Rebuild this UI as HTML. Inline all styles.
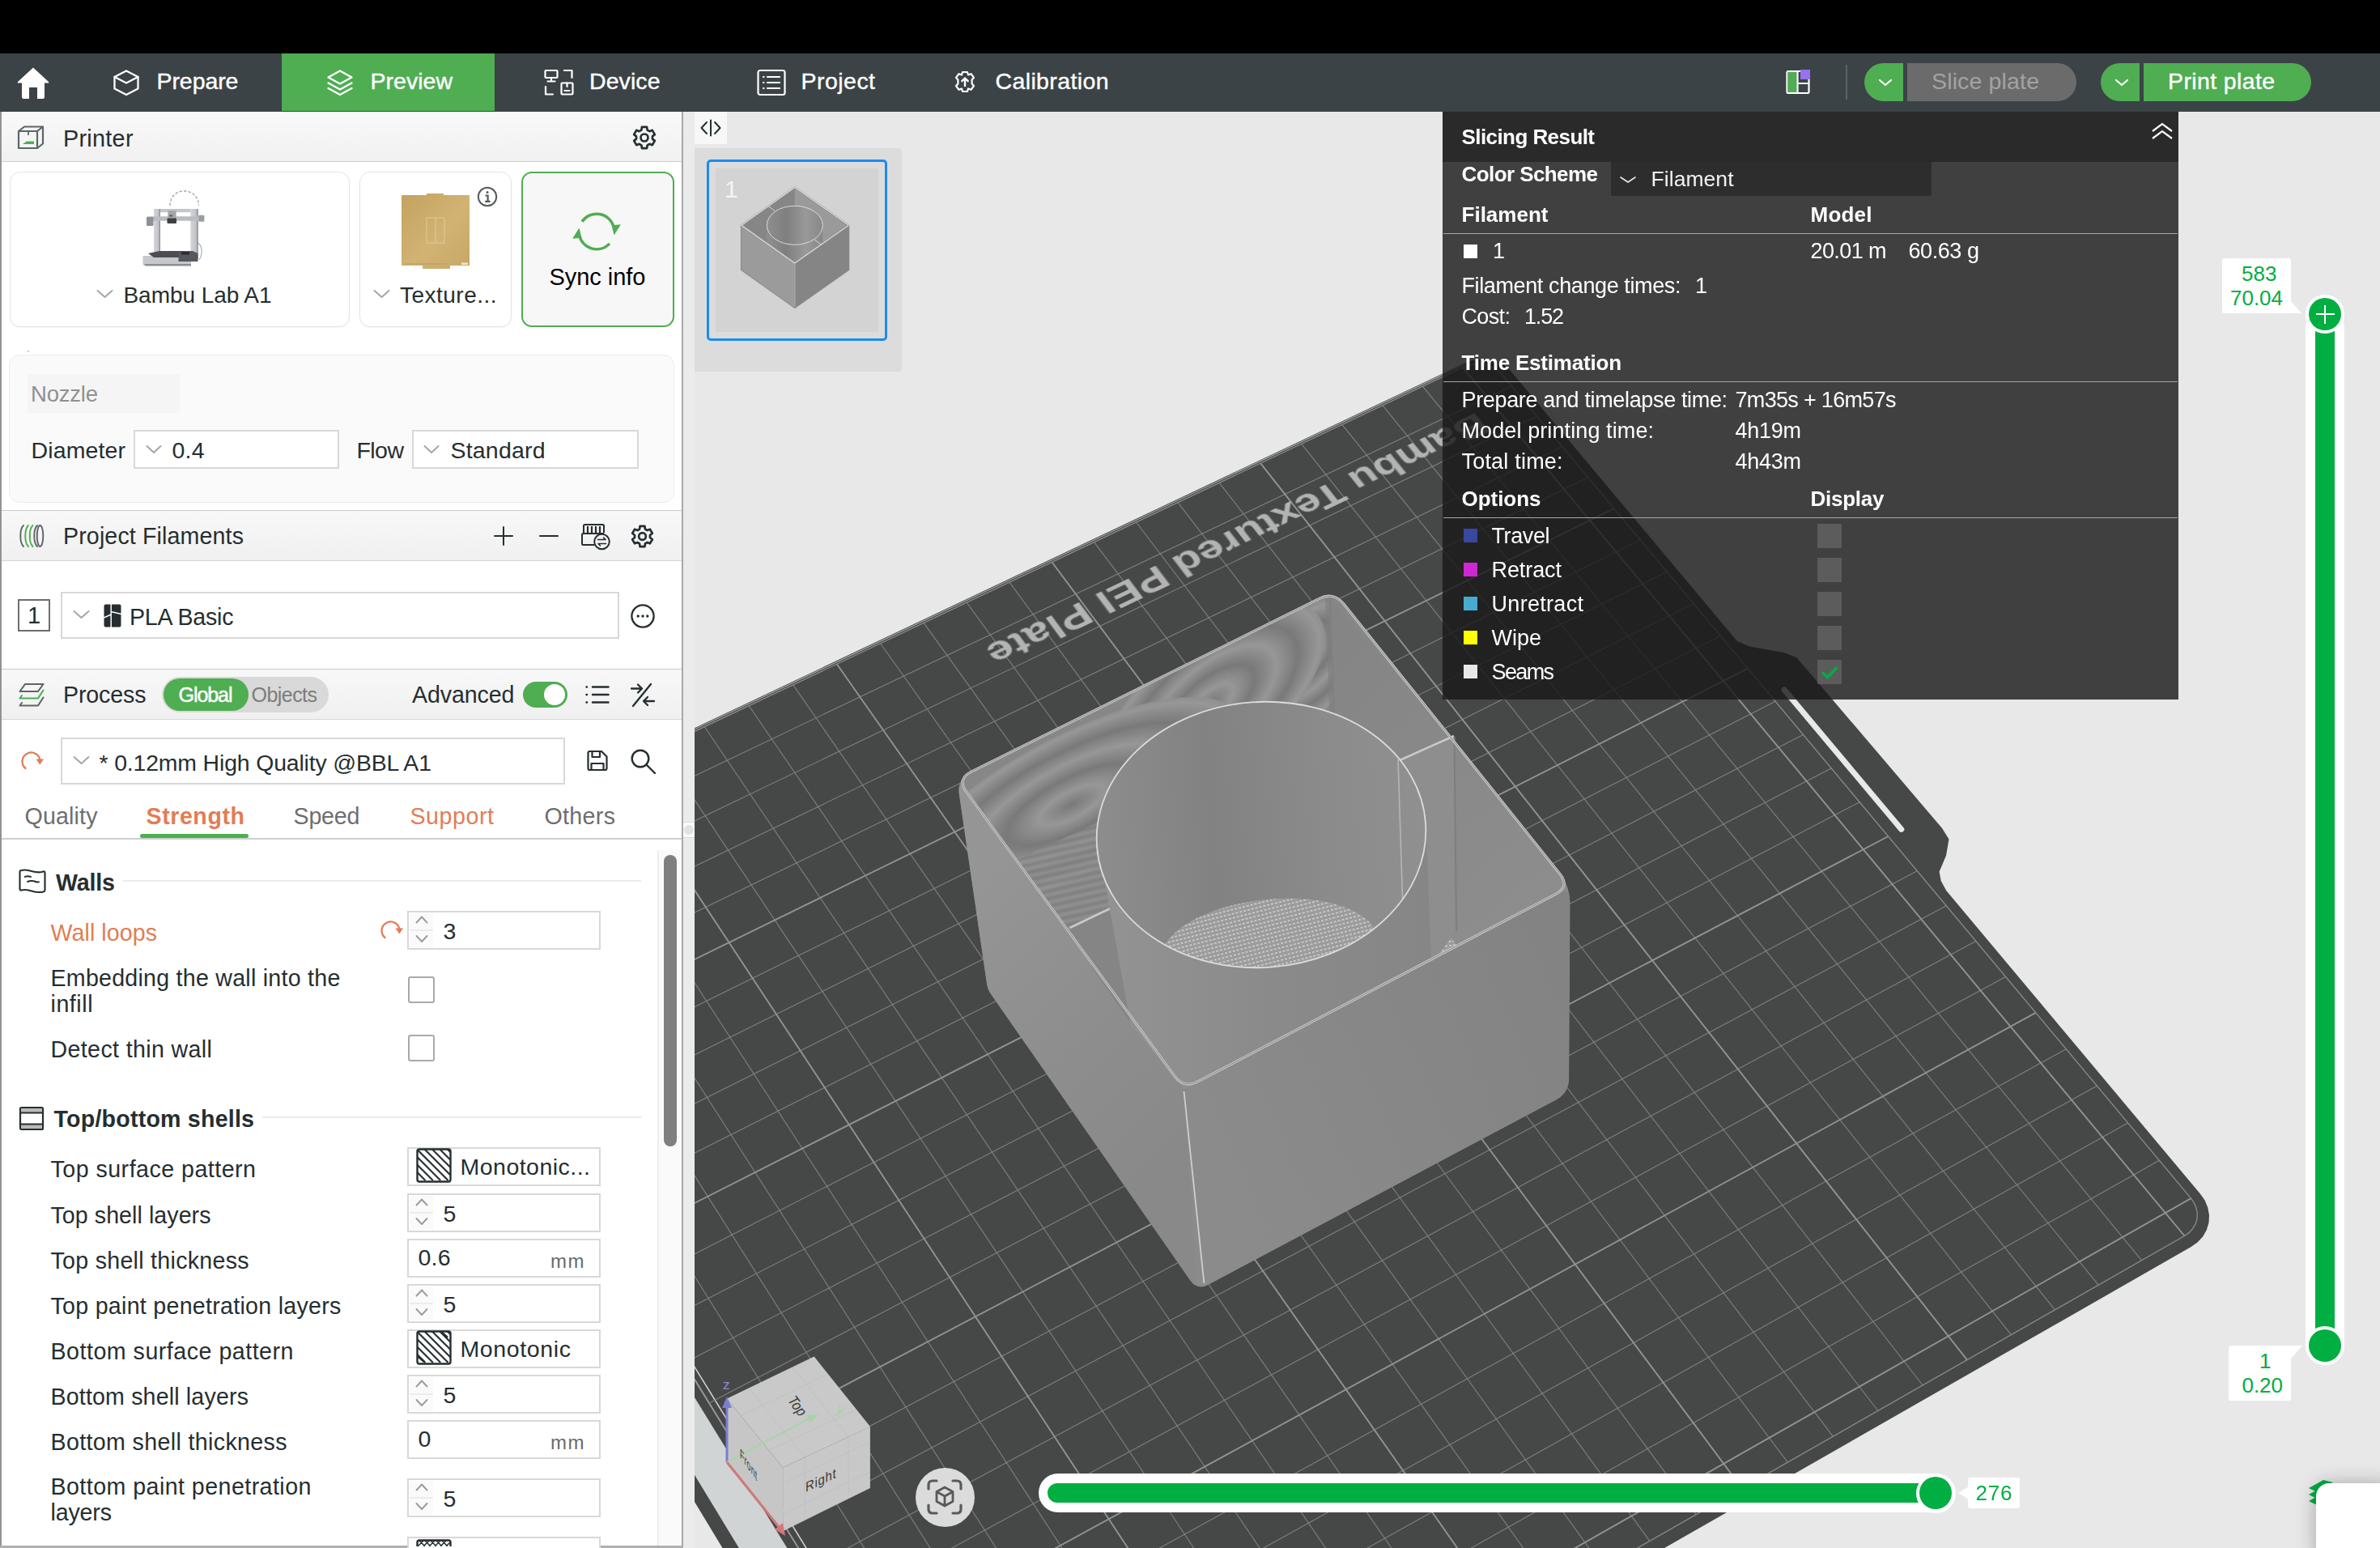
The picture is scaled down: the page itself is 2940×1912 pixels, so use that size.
<!DOCTYPE html>
<html lang="en"><head><meta charset="utf-8"><title>Bambu Studio</title><style>
*{box-sizing:border-box;margin:0;padding:0}
html,body{width:2940px;height:1912px;overflow:hidden;background:#e8e8e8}
body{position:relative;font-family:"Liberation Sans",sans-serif;}
.b{position:absolute;display:block}
.t{position:absolute;white-space:nowrap;display:block}
#vp{position:absolute;left:844px;top:138px;width:2096px;height:1774px;overflow:hidden;background:#e8e8e8}
#vpi{position:absolute;left:-844px;top:-138px;width:2940px;height:1912px}
</style></head>
<body>
<div id="vp"><div id="vpi">
<div class="b" style="left:844px;top:138px;width:14px;height:1774px;background:#ebebeb"></div>
<div class="b" style="left:844px;top:1015px;width:14px;height:20px;background:#fafafa;border-top:1px solid #d9d9d9;border-bottom:1px solid #d9d9d9"></div>
<div class="b" style="left:845px;top:1019.2px;width:11.6px;height:11.6px;background:#e2e2e2;border-radius:6px"></div>
<svg class="b" style="left:858px;top:138px" width="2082" height="1774" viewBox="858 138 2082 1774">
<path d="M439.8 1164.6 L434.9 1153.7 L432.9 1142.0 L433.8 1129.9 L437.7 1117.9 L444.3 1106.4 L453.3 1095.9 L464.5 1086.9 L477.3 1079.5 L1809.9 448.3 L1817.0 445.6 L1824.7 444.0 L1832.6 443.6 L1840.5 444.3 L1848.0 446.2 L1854.9 449.2 L1860.9 453.1 L1865.8 457.8 L2146.0 792.1 L2161.5 798.6 L2203.5 806.0 L2219.5 812.3 L2398.7 1022.6 L2407.5 1036.4 L2404.0 1056.7 L2395.6 1076.7 L2397.7 1088.0 L2404.2 1100.1 L2717.9 1474.4 L2723.6 1482.6 L2727.3 1491.6 L2729.0 1500.9 L2728.5 1510.2 L2725.9 1519.0 L2721.3 1527.2 L2714.8 1534.3 L2706.7 1540.1 L1267.8 2362.6 L1252.2 2369.7 L1235.5 2374.0 L1218.5 2375.2 L1201.8 2373.2 L1186.1 2368.3 L1171.9 2360.5 L1159.8 2350.2 L1150.3 2337.7 Z" fill="#464848"/>
<path d="M587.6 1377.0 L630.7 1355.8 L1244.8 2355.7 L1198.6 2382.1 Z" fill="#d0d4d4"/>
<path d="M537.1 1168.0 L1242.2 2311.4" stroke="#d8d8d8" stroke-width="1.5" fill="none"/>
<path d="M530.2 1171.3 L1234.7 2315.7" stroke="#e0e0e0" stroke-width="1.5" fill="none"/>
<path d="M486.8 1076.7 L1815.2 447.3" stroke="#a4a6a6" stroke-width="1.2" fill="none"/>
<path d="M533.9 1057.1 L1318.4 2313.8 M503.2 1127.6 L1867.3 476.8 M590.9 1030.1 L1380.8 2278.2 M530.2 1171.3 L1898.5 514.1 M647.5 1003.3 L1442.7 2242.8 M557.4 1215.5 L1930.0 551.8 M703.8 976.6 L1504.2 2207.8 M584.9 1260.2 L1961.8 589.8 M815.2 923.8 L1625.8 2138.4 M640.7 1350.8 L2026.3 666.9 M870.4 897.7 L1686.0 2104.1 M669.0 1396.9 L2059.0 706.1 M925.2 871.7 L1745.7 2070.0 M697.6 1443.4 L2092.1 745.6 M979.7 845.9 L1805.0 2036.2 M726.6 1490.4 L2125.4 785.4 M1087.6 794.7 L1922.3 1969.3 M785.4 1585.9 L2193.1 866.3 M1141.1 769.4 L1980.3 1936.2 M815.2 1634.4 L2227.4 907.4 M1194.2 744.2 L2037.9 1903.4 M845.4 1683.5 L2262.1 948.9 M1247.0 719.2 L2095.1 1870.7 M875.9 1733.0 L2297.1 990.7 M1351.6 669.6 L2208.3 1806.2 M938.0 1833.8 L2368.2 1075.7 M1403.5 645.0 L2264.3 1774.2 M969.5 1885.0 L2404.3 1118.8 M1455.0 620.6 L2319.9 1742.5 M1001.4 1936.7 L2440.7 1162.4 M1506.2 596.3 L2375.1 1711.0 M1033.6 1989.1 L2477.5 1206.4 M1607.6 548.2 L2484.4 1648.6 M1099.1 2095.5 L2552.3 1295.8 M1657.9 524.4 L2538.5 1617.8 M1132.4 2149.6 L2590.2 1341.2 M1707.9 500.7 L2592.2 1587.2 M1166.1 2204.4 L2628.6 1387.0 M1757.5 477.2 L2645.5 1556.7 M1200.2 2259.7 L2667.3 1433.3" stroke="#7d8180" stroke-width="1.1" fill="none"/>
<path d="M759.6 950.1 L1565.2 2173.0 M612.6 1305.3 L1993.9 628.2 M1033.8 820.2 L1863.8 2002.6 M755.8 1537.9 L2159.1 825.7 M1299.5 694.3 L2151.9 1838.3 M906.8 1783.1 L2332.5 1033.0 M1557.1 572.2 L2429.9 1679.7 M1066.2 2042.0 L2514.7 1250.9 M1806.9 453.8 L2698.5 1526.5 M1234.7 2315.7 L2706.5 1480.1" stroke="#8f9392" stroke-width="1.9" fill="none"/>
<path d="M492.5 1110.2 L490.1 1104.8 L489.1 1099.0 L489.5 1093.0 L491.4 1087.1 L494.6 1081.4 L499.1 1076.2 L504.6 1071.6 L511.0 1068.0 L1806.9 453.8 L1813.0 451.5 L1819.6 450.1 L1826.4 449.8 L1833.2 450.4 L1839.6 452.0 L1845.6 454.6 L1850.7 457.9 L1854.9 462.0 L2706.5 1480.1 L2710.5 1486.0 L2713.1 1492.3 L2714.3 1498.9 L2714.0 1505.4 L2712.1 1511.7 L2708.8 1517.4 L2704.3 1522.4 L2698.5 1526.5 L1293.3 2328.1 L1285.5 2331.6 L1277.3 2333.7 L1268.8 2334.3 L1260.5 2333.4 L1252.6 2330.9 L1245.5 2327.0 L1239.4 2321.9 L1234.7 2315.7 Z" stroke="#8a8c8c" stroke-width="1.3" fill="none"/>
<path d="M2204.1 852.0 L2348.8 1024.4" stroke="#e8e8e8" stroke-width="7" stroke-linecap="round" fill="none"/>
<defs><linearGradient id="mgL" x1="1190" y1="1100" x2="1480" y2="1400" gradientUnits="userSpaceOnUse"><stop offset="0" stop-color="#959595"/><stop offset="0.6" stop-color="#8d8d8d"/><stop offset="1" stop-color="#898989"/></linearGradient><linearGradient id="mgR" x1="1480" y1="1400" x2="1940" y2="1200" gradientUnits="userSpaceOnUse"><stop offset="0" stop-color="#8b8b8b"/><stop offset="1" stop-color="#838383"/></linearGradient><linearGradient id="mgI" x1="1300" y1="800" x2="1500" y2="1200" gradientUnits="userSpaceOnUse"><stop offset="0" stop-color="#8f8f8f"/><stop offset="0.25" stop-color="#7c7c7c"/><stop offset="0.45" stop-color="#919191"/><stop offset="0.65" stop-color="#7f7f7f"/><stop offset="1" stop-color="#8a8a8a"/></linearGradient><linearGradient id="mgC" x1="1355" y1="0" x2="1762" y2="0" gradientUnits="userSpaceOnUse"><stop offset="0" stop-color="#8d8d8d"/><stop offset="0.35" stop-color="#828282"/><stop offset="0.7" stop-color="#8b8b8b"/><stop offset="1" stop-color="#909090"/></linearGradient><linearGradient id="mgO" x1="1385" y1="0" x2="1770" y2="0" gradientUnits="userSpaceOnUse"><stop offset="0" stop-color="#929292"/><stop offset="0.5" stop-color="#8a8a8a"/><stop offset="1" stop-color="#868686"/></linearGradient><clipPath id="cpE"><ellipse cx="1558" cy="1031" rx="203.5" ry="164" transform="rotate(-4 1558 1031)"/></clipPath><clipPath id="cpRim"><path d="M1193.8 978.1 Q1182.0 962.0 1199.9 953.1 L1629.6 739.4 Q1647.5 730.5 1660.0 746.1 L1927.0 1079.4 Q1939.5 1095.0 1921.8 1104.3 L1480.2 1335.7 Q1462.5 1345.0 1450.7 1328.9 Z"/></clipPath><radialGradient id="eye" spreadMethod="repeat" r="0.19"><stop offset="0" stop-color="#797979"/><stop offset="0.5" stop-color="#979797"/><stop offset="1" stop-color="#797979"/></radialGradient><linearGradient id="bands" spreadMethod="repeat" x1="0" y1="0" x2="2" y2="9" gradientUnits="userSpaceOnUse"><stop offset="0" stop-color="#7e7e7e"/><stop offset="0.5" stop-color="#939393"/><stop offset="1" stop-color="#7e7e7e"/></linearGradient><linearGradient id="mgFR" x1="1650" y1="800" x2="1930" y2="1150" gradientUnits="userSpaceOnUse"><stop offset="0" stop-color="#858585"/><stop offset="1" stop-color="#8e8e8e"/></linearGradient><pattern id="hatch" width="5" height="5" patternUnits="userSpaceOnUse" patternTransform="rotate(-8)"><rect width="5" height="5" fill="#9b9b9b"/><rect width="3" height="1.6" fill="#d0d0d0"/></pattern></defs>
<path d="M1184.9 981.8 Q1182.0 962.0 1199.9 953.1 L1627.8 740.3 Q1647.5 730.5 1661.3 747.7 L1927.0 1079.4 Q1939.5 1095.0 1939.4 1115.0 L1938.1 1332.0 Q1938.0 1350.0 1922.1 1358.4 L1493.1 1586.5 Q1479.0 1594.0 1469.9 1580.9 L1223.4 1226.9 Q1220.0 1222.0 1219.1 1216.1 Z" fill="#8a8a8a"/>
<clipPath id="cpSil"><path d="M1184.9 981.8 Q1182.0 962.0 1199.9 953.1 L1627.8 740.3 Q1647.5 730.5 1661.3 747.7 L1927.0 1079.4 Q1939.5 1095.0 1939.4 1115.0 L1938.1 1332.0 Q1938.0 1350.0 1922.1 1358.4 L1493.1 1586.5 Q1479.0 1594.0 1469.9 1580.9 L1223.4 1226.9 Q1220.0 1222.0 1219.1 1216.1 Z"/></clipPath><g clip-path="url(#cpSil)">
<path d="M1184.6 979.8 Q1182.0 962.0 1192.6 976.5 L1462.5 1345.0 L1479.0 1594.0 L1223.4 1226.9 Q1220.0 1222.0 1219.1 1216.1 Z" fill="url(#mgL)"/>
<path d="M1462.5 1345.0 L1923.6 1103.4 Q1939.5 1095.0 1939.4 1113.0 L1938.1 1332.0 Q1938.0 1350.0 1922.1 1358.4 L1479.0 1594.0 Z" fill="url(#mgR)"/>
</g>
<path d="M1193.8 978.1 Q1182.0 962.0 1199.9 953.1 L1629.6 739.4 Q1647.5 730.5 1660.0 746.1 L1927.0 1079.4 Q1939.5 1095.0 1921.8 1104.3 L1480.2 1335.7 Q1462.5 1345.0 1450.7 1328.9 Z" fill="#878787"/>
<g clip-path="url(#cpRim)">
<path d="M1220 1216 L1651 975 L1938 1346 L1479 1588 Z" fill="url(#hatch)"/>
<path d="M1182 962 L1643.5 730.5 L1651 975 L1220 1216 Z" fill="#878787"/>
<clipPath id="cpFL"><path d="M1182 962 L1643.5 730.5 L1651 975 L1220 1216 Z"/></clipPath>
<g clip-path="url(#cpFL)"><ellipse cx="1614" cy="806" rx="120" ry="66" transform="rotate(-52 1614 806)" fill="url(#eye)"/><ellipse cx="1497" cy="868" rx="170" ry="78" transform="rotate(-40 1497 868)" fill="url(#eye)"/><ellipse cx="1324" cy="994" rx="235" ry="84" transform="rotate(-28 1324 994)" fill="url(#eye)"/><path d="M1240 1070 L1380 1005 L1390 1130 L1330 1160 Z" fill="url(#bands)" opacity=".8"/></g>
<path d="M1641.5 734.5 L1939.5 1095 L1938 1346 L1651 975 Z" fill="url(#mgFR)"/>
<path d="M1640.5 738.5 L1649 975" stroke="#7d7d7d" stroke-width="7" opacity=".6" fill="none"/>
</g>
<path d="M1321 1146 L1382 1117 L1396 1262 L1352 1200 Z" fill="#858585"/>
<path d="M1321.5 1146 L1382 1117" stroke="#c9c9c9" stroke-width="2.6" fill="none"/>
<path d="M1727 940 L1796 909 L1799 1150 L1770 1188 L1733 1120 Z" fill="#8e8e8e"/>
<path d="M1727 940 L1796 909" stroke="#c9c9c9" stroke-width="2.6" fill="none"/>
<path d="M1796.5 910 L1799 1150" stroke="#7e7e7e" stroke-width="2" fill="none"/>
<path d="M1355.5 1039 L1397 1266 L1462.5 1345 L1768 1189 L1761.5 1017 A203.5 164 -4 0 1 1355.5 1039 Z" fill="url(#mgO)"/>
<ellipse cx="1558" cy="1031" rx="203.5" ry="164" transform="rotate(-4 1558 1031)" fill="url(#mgC)"/>
<g clip-path="url(#cpE)"><ellipse cx="1568" cy="1172" rx="134" ry="61" transform="rotate(-6 1568 1172)" fill="url(#hatch)"/><path d="M1727 938 L1733 1125" stroke="#b5b5b5" stroke-width="1.6"/></g>
<ellipse cx="1558" cy="1031" rx="203.5" ry="164" transform="rotate(-4 1558 1031)" fill="none" stroke="#dcdcdc" stroke-width="1.8"/>
<path d="M1193.8 978.1 Q1182.0 962.0 1199.9 953.1 L1629.6 739.4 Q1647.5 730.5 1660.0 746.1 L1927.0 1079.4 Q1939.5 1095.0 1921.8 1104.3 L1480.2 1335.7 Q1462.5 1345.0 1450.7 1328.9 Z" fill="none" stroke="#c4c4c4" stroke-width="3.2"/>
<path d="M1193.8 978.1 Q1182.0 962.0 1199.9 953.1 L1629.6 739.4 Q1647.5 730.5 1660.0 746.1 L1927.0 1079.4 Q1939.5 1095.0 1921.8 1104.3 L1480.2 1335.7 Q1462.5 1345.0 1450.7 1328.9 Z" fill="none" stroke="#7c7c7c" stroke-width="0.8"/>
<path d="M1462.5 1348 L1487.4 1585" stroke="#cfcfcf" stroke-width="1.8" fill="none"/>
<polygon points="897.9,1727.5 1005.7,1675.6 1074.9,1762.1 967.1,1812.7" fill="#c9c9c9"/><polygon points="897.9,1727.5 967.1,1812.7 967.1,1891.2 897.9,1806.1" fill="#c6c6c6"/><polygon points="967.1,1812.7 1074.9,1762.1 1074.9,1838.0 967.1,1891.2" fill="#c8c8c8"/>
<g stroke="#b4b4b4" stroke-width="0.8" stroke-dasharray="1.5 1.5" fill="none"><path d="M925 1714.5 L994 1800 M979 1688.5 L1048 1775 M915 1749 L1023 1697 M950 1791 L1058 1741"/><path d="M994 1800 V1878 M1048 1775 V1851 M967 1832 L1075 1781 M967 1870 L1075 1818"/></g>
<path d="M898 1806 L898 1738" stroke="#7d7dd0" stroke-width="3" fill="none"/><path d="M898 1725 L892 1739 L904 1739 Z" fill="#7d7dd0"/>
<path d="M898 1806 L1000 1752" stroke="#a8d4a8" stroke-width="2.2" fill="none"/><path d="M1011 1747 L996 1748 L1001 1757 Z" fill="#a8d4a8"/>
<path d="M898 1806 L962 1886" stroke="#d07878" stroke-width="3" fill="none"/><path d="M970 1897 L957 1889 L967 1881 Z" fill="#d07878"/>
<text x="893" y="1716" font-family="Liberation Sans, sans-serif" font-size="17" fill="#8a8adc">z</text>
<text x="1032" y="1745" font-family="Liberation Sans, sans-serif" font-size="19" font-style="italic" fill="#a8d4a8" transform="rotate(15 1032 1745)">y</text>
<text font-family="Liberation Sans, sans-serif" font-size="21" fill="#3a3a3a" transform="matrix(0.45 0.62 -0.78 0.4 972 1729)">Top</text>
<text font-family="Liberation Sans, sans-serif" font-size="17" fill="#3a3a3a" transform="matrix(0.5 0.7 0 1 914 1800)" letter-spacing="0.6">Front</text>
<text font-family="Liberation Sans, sans-serif" font-size="17" fill="#3a3a3a" transform="matrix(0.88 -0.42 0 1 995 1843)" letter-spacing="0.8">Right</text>
</svg>
<div class="b" style="left:0;top:0;width:1024px;height:1024px;transform-origin:0 0;transform:matrix3d(1.476995,-0.593635,0,0.00008117,0.603447,0.941405,0,-0.00012524,0,0,1,0,476.58,1084.283,0,1);pointer-events:none;"><div style="position:absolute;left:508.0px;top:43.0px;width:476.0px;height:34.9px;font-size:34.9px;line-height:34.9px;color:#b3b3b3;white-space:nowrap;text-align:center;transform:rotate(180deg);font-weight:700;"><span style="display:inline-block;transform:scaleX(1.1);transform-origin:50% 50%;">Bambu Textured PEI Plate</span></div></div>
<div class="b" style="left:858px;top:138px;width:40px;height:39.5px;background:#f7f7f7;"></div>
<svg class="b" style="left:864px;top:147px" width="28" height="22" viewBox="0 0 28 22" fill="none" stroke="#262e30" stroke-width="2" stroke-linecap="round" stroke-linejoin="round"><path d="M9 4 L2.5 11 L9 18 M19 4 L25.5 11 L19 18 M14 1.5 V20.5"/></svg>
<div class="b" style="left:858px;top:183px;width:255.5px;height:276px;background:#dcdcdc;border-radius:0 4px 4px 0;"></div>
<div class="b" style="left:872.5px;top:197px;width:223.0px;height:223.5px;background:#d3d3d3;border:3.5px solid #1e8beb;border-radius:5px;box-shadow:inset 0 0 0 8px #dcdcdc;"></div>
<span class="t" style="left:895.0px;top:219.0px;font-size:30px;line-height:30px;color:#f4f4f4;letter-spacing:0.00px;">1</span>
<svg class="b" style="left:905px;top:222px" width="154" height="168" viewBox="905 222 154 168"><defs><linearGradient id="tg" x1="947" x2="1016" y1="0" y2="0" gradientUnits="userSpaceOnUse"><stop offset="0" stop-color="#8f8f8f"/><stop offset="0.35" stop-color="#7f7f7f"/><stop offset="0.7" stop-color="#999"/><stop offset="1" stop-color="#888"/></linearGradient></defs><path d="M981.8 231.5 L1048.3 278.3 V333.2 L981.8 380 L915.9 333.2 V278.3 Z" fill="#8a8a8a" stroke="#8a8a8a" stroke-width="2" stroke-linejoin="round"/><path d="M915.9 278.3 L981.8 325 V380 L915.9 333.2 Z" fill="#9b9b9b"/><path d="M1048.3 278.3 L981.8 325 V380 L1048.3 333.2 Z" fill="#858585"/><path d="M981.8 231.5 L1048.3 278.3 L981.8 325 L915.9 278.3 Z" fill="#868686"/><path d="M981.8 233 L1046 278.3 L1016 300 V278 L981.8 254 Z" fill="#9a9a9a"/><path d="M947.3 278.3 V300.5 L981.8 325 L1016.3 300.5 V278.3 Z" fill="url(#tg)"/><ellipse cx="981.8" cy="278.3" rx="34.5" ry="24" fill="url(#tg)" stroke="#e2e2e2" stroke-width="0.9"/><path d="M949 254.5 L957 260.5 M1006 296 L1015 302.5" stroke="#dedede" stroke-width="0.9"/><path d="M981.8 231.5 L1048.3 278.3 L981.8 325 L915.9 278.3 Z" fill="none" stroke="#e0e0e0" stroke-width="1.1" stroke-linejoin="round"/><path d="M981.8 326 V379" stroke="#a5a5a5" stroke-width="1.5"/></svg>
<div class="b" style="left:1782px;top:138px;width:909px;height:726px;background:rgba(25,25,25,0.81);"></div>
<div class="b" style="left:1782px;top:138px;width:909px;height:61.5px;background:rgba(0,0,0,0.35);"></div>
<span class="t" style="left:1805.5px;top:156.0px;font-size:26px;line-height:26px;color:#fff;letter-spacing:-0.57px;font-weight:700;">Slicing Result</span>
<svg class="b" style="left:2656px;top:150px" width="30" height="24" viewBox="0 0 30 24" fill="none" stroke="#fff" stroke-width="2.2" stroke-linejoin="miter"><path d="M3 12 L15 3 L27 12 M3 21 L15 12 L27 21"/></svg>
<span class="t" style="left:1805.5px;top:202.0px;font-size:26px;line-height:26px;color:#fff;letter-spacing:-0.58px;font-weight:700;">Color Scheme</span>
<div class="b" style="left:1990px;top:200px;width:396px;height:42px;background:#2d2d2d;border-radius:0 0 3px 3px;"></div>
<svg class="b" style="left:2000px;top:216px" width="22" height="12" viewBox="0 0 22 12" fill="none" stroke="#e8e8e8" stroke-width="1.6" stroke-linecap="round" stroke-linejoin="round"><path d="M2 3 L11 9 L20 3"/></svg>
<span class="t" style="left:2039.5px;top:208.2px;font-size:26.5px;line-height:26.5px;color:#f2f2f2;letter-spacing:0.06px;">Filament</span>
<span class="t" style="left:1805.5px;top:252.0px;font-size:26px;line-height:26px;color:#fff;letter-spacing:0.01px;font-weight:700;">Filament</span>
<span class="t" style="left:2236.5px;top:252.0px;font-size:26px;line-height:26px;color:#fff;letter-spacing:0.22px;font-weight:700;">Model</span>
<div class="b" style="left:1783px;top:287.5px;width:907px;height:1.5px;background:#a8a8a8;"></div>
<div class="b" style="left:1808px;top:302px;width:17px;height:17px;background:#fff;"></div>
<span class="t" style="left:1844.0px;top:296.5px;font-size:27px;line-height:27px;color:#fff;letter-spacing:0.00px;">1</span>
<span class="t" style="left:2236.5px;top:296.5px;font-size:27px;line-height:27px;color:#fff;letter-spacing:-0.59px;">20.01 m</span>
<span class="t" style="left:2357.5px;top:296.5px;font-size:27px;line-height:27px;color:#fff;letter-spacing:-0.43px;">60.63 g</span>
<span class="t" style="left:1805.5px;top:339.5px;font-size:27px;line-height:27px;color:#fff;letter-spacing:-0.39px;">Filament change times:</span>
<span class="t" style="left:2094.0px;top:339.5px;font-size:27px;line-height:27px;color:#fff;letter-spacing:0.00px;">1</span>
<span class="t" style="left:1805.5px;top:377.5px;font-size:27px;line-height:27px;color:#fff;letter-spacing:-0.63px;">Cost:</span>
<span class="t" style="left:1883.0px;top:377.5px;font-size:27px;line-height:27px;color:#fff;letter-spacing:-1.18px;">1.52</span>
<span class="t" style="left:1805.5px;top:435.0px;font-size:26px;line-height:26px;color:#fff;letter-spacing:-0.20px;font-weight:700;">Time Estimation</span>
<div class="b" style="left:1783px;top:470.5px;width:907px;height:1.5px;background:#a8a8a8;"></div>
<span class="t" style="left:1805.5px;top:480.5px;font-size:27px;line-height:27px;color:#fff;letter-spacing:-0.35px;">Prepare and timelapse time:</span>
<span class="t" style="left:2143.5px;top:480.5px;font-size:27px;line-height:27px;color:#fff;letter-spacing:-0.68px;">7m35s + 16m57s</span>
<span class="t" style="left:1805.5px;top:518.5px;font-size:27px;line-height:27px;color:#fff;letter-spacing:0.10px;">Model printing time:</span>
<span class="t" style="left:2143.5px;top:518.5px;font-size:27px;line-height:27px;color:#fff;letter-spacing:-0.26px;">4h19m</span>
<span class="t" style="left:1805.5px;top:556.5px;font-size:27px;line-height:27px;color:#fff;letter-spacing:0.20px;">Total time:</span>
<span class="t" style="left:2143.5px;top:556.5px;font-size:27px;line-height:27px;color:#fff;letter-spacing:-0.26px;">4h43m</span>
<span class="t" style="left:1805.5px;top:603.0px;font-size:26px;line-height:26px;color:#fff;letter-spacing:-0.04px;font-weight:700;">Options</span>
<span class="t" style="left:2236.5px;top:603.0px;font-size:26px;line-height:26px;color:#fff;letter-spacing:-0.25px;font-weight:700;">Display</span>
<div class="b" style="left:1783px;top:638.5px;width:907px;height:1.5px;background:#a8a8a8;"></div>
<div class="b" style="left:1808px;top:652.5px;width:17px;height:17.0px;background:#3a479f;"></div>
<span class="t" style="left:1842.5px;top:648.5px;font-size:27px;line-height:27px;color:#fff;letter-spacing:-0.40px;">Travel</span>
<div class="b" style="left:2245px;top:647px;width:30px;height:30px;background:rgba(120,120,120,0.5);"></div>
<div class="b" style="left:1808px;top:694.5px;width:17px;height:17.0px;background:#cf27d4;"></div>
<span class="t" style="left:1842.5px;top:690.5px;font-size:27px;line-height:27px;color:#fff;letter-spacing:-0.09px;">Retract</span>
<div class="b" style="left:2245px;top:689px;width:30px;height:30px;background:rgba(120,120,120,0.5);"></div>
<div class="b" style="left:1808px;top:736.5px;width:17px;height:17.0px;background:#46accf;"></div>
<span class="t" style="left:1842.5px;top:732.5px;font-size:27px;line-height:27px;color:#fff;letter-spacing:0.31px;">Unretract</span>
<div class="b" style="left:2245px;top:731px;width:30px;height:30px;background:rgba(120,120,120,0.5);"></div>
<div class="b" style="left:1808px;top:778.5px;width:17px;height:17.0px;background:#ffff00;"></div>
<span class="t" style="left:1842.5px;top:774.5px;font-size:27px;line-height:27px;color:#fff;letter-spacing:-0.00px;">Wipe</span>
<div class="b" style="left:2245px;top:773px;width:30px;height:30px;background:rgba(120,120,120,0.5);"></div>
<div class="b" style="left:1808px;top:820.5px;width:17px;height:17.0px;background:#e8e8e8;"></div>
<span class="t" style="left:1842.5px;top:816.5px;font-size:27px;line-height:27px;color:#fff;letter-spacing:-1.63px;">Seams</span>
<div class="b" style="left:2245px;top:815px;width:30px;height:30px;background:rgba(120,120,120,0.5);"></div>
<svg class="b" style="left:2248px;top:818px" width="24" height="24" viewBox="0 0 24 24" fill="none" stroke="#00ae42" stroke-width="3.6" stroke-linejoin="miter"><path d="M3 12.5 L9.5 18.5 L21.5 6"/></svg>
<div class="b" style="left:2848px;top:380px;width:48px;height:1306px;background:#fff;border-radius:24px;"></div>
<div class="b" style="left:2860px;top:388px;width:24px;height:1274px;background:#00ae42;"></div>
<div class="b" style="left:2848px;top:364px;width:48px;height:48px;border-radius:24px;background:#fff;"></div>
<div class="b" style="left:2852px;top:368px;width:40px;height:40px;border-radius:20px;background:#00ae42;"></div>
<div class="b" style="left:2860.5px;top:386.8px;width:23.0px;height:2.3999999999999773px;background:#fff;"></div>
<div class="b" style="left:2870.8px;top:376.5px;width:2.399999999999636px;height:23.0px;background:#fff;"></div>
<div class="b" style="left:2848px;top:1638px;width:48px;height:48px;border-radius:24px;background:#fff;"></div>
<div class="b" style="left:2852px;top:1642px;width:40px;height:40px;border-radius:20px;background:#00ae42;"></div>
<div class="b" style="left:2745px;top:319px;width:85px;height:68px;background:#fff;border-radius:3px;"></div>
<svg class="b" style="left:2829px;top:371px" width="16" height="16" viewBox="0 0 16 16"><path d="M0 0 L14 16 L0 16 Z" fill="#fff"/></svg>
<span class="t" style="left:2769.0px;top:324.5px;font-size:26px;line-height:26px;color:#00ae42;letter-spacing:0.06px;">583</span>
<span class="t" style="left:2755.0px;top:354.5px;font-size:26px;line-height:26px;color:#00ae42;letter-spacing:-0.02px;">70.04</span>
<div class="b" style="left:2753px;top:1662px;width:77px;height:68px;background:#fff;border-radius:3px;"></div>
<svg class="b" style="left:2829px;top:1662px" width="16" height="18" viewBox="0 0 16 18"><path d="M0 0 L15 0 L0 17 Z" fill="#fff"/></svg>
<span class="t" style="left:2791.0px;top:1668.0px;font-size:26px;line-height:26px;color:#00ae42;letter-spacing:0.00px;">1</span>
<span class="t" style="left:2769.5px;top:1698.0px;font-size:26px;line-height:26px;color:#00ae42;letter-spacing:-0.03px;">0.20</span>
<div class="b" style="left:1282.5px;top:1820px;width:1132.5px;height:48px;background:#fff;border-radius:24px;"></div>
<div class="b" style="left:1293.5px;top:1832px;width:1098.5px;height:24px;background:#00ae42;border-radius:12px 0 0 12px;"></div>
<div class="b" style="left:2366.5px;top:1819.5px;width:49px;height:49px;border-radius:25px;background:#fff;"></div>
<div class="b" style="left:2371px;top:1824px;width:40px;height:40px;border-radius:20px;background:#00ae42;"></div>
<div class="b" style="left:2431px;top:1825px;width:64px;height:37.5px;background:#fff;border-radius:3px;"></div>
<svg class="b" style="left:2419px;top:1836px" width="13" height="16" viewBox="0 0 13 16"><path d="M13 0 L0 8 L13 16 Z" fill="#fff"/></svg>
<span class="t" style="left:2440.5px;top:1831.0px;font-size:26px;line-height:26px;color:#00ae42;letter-spacing:0.81px;">276</span>
<div class="b" style="left:1130.5px;top:1812.5px;width:73px;height:73px;border-radius:37px;background:rgba(228,228,228,0.94);"></div>
<svg class="b" style="left:1144px;top:1826px" width="46" height="46" viewBox="0 0 46 46" fill="none" stroke="#5a5a5a" stroke-width="3.2" stroke-linecap="round" stroke-linejoin="round"><path d="M3 13 V8 Q3 3 8 3 H13 M33 3 H38 Q43 3 43 8 V13 M43 33 V38 Q43 43 38 43 H33 M13 43 H8 Q3 43 3 38 V33"/><path d="M23 11 L33 16.5 V28.5 L23 34 L13 28.5 V16.5 Z M13 16.5 L23 22 L33 16.5 M23 22 V34" stroke-width="2.8"/></svg>
<svg class="b" style="left:2848px;top:1826px" width="40" height="36" viewBox="0 0 40 36"><path d="M4 12 L22 2 L34 5 L12 16 Z M4 20 L22 10 L34 13 L12 24 Z M4 28 L22 18 L34 21 L12 32 Z" fill="#00ae42"/></svg>
<div class="b" style="left:2861px;top:1832px;width:99px;height:98px;background:#fff;border-radius:16px;box-shadow:0 1px 24px rgba(0,0,0,0.3);"></div>
</div></div>
<div class="b" style="left:0px;top:138px;width:843px;height:1774px;background:#fff;"></div>
<div class="b" style="left:0px;top:138px;width:2px;height:1774px;background:#8f9496;"></div>
<div class="b" style="left:842px;top:138px;width:1.5px;height:1774px;background:#a8a8a8;"></div>
<div class="b" style="left:0px;top:1909px;width:843px;height:3px;background:#b0b0b0;"></div>
<div class="b" style="left:2px;top:138px;width:840px;height:62px;background:linear-gradient(#f9f9f9,#f1f1f1);border-bottom:1.5px solid #cfcfcf;"></div>
<svg class="b" style="left:21px;top:155px" width="34" height="30" viewBox="0 0 34 30" fill="none" stroke="#5d6567" stroke-width="2.2" stroke-linejoin="round"><path d="M2 7 H25 V28 H2 Z"/><path d="M2 7 L9 1.5 H32 V22.5 L25 28 M25 7 L32 1.5"/><path d="M14 7 V12" stroke-width="1.8"/><path d="M7 23 L12 19.5 H21 V23 Z" fill="#4fad52" stroke="none"/></svg>
<span class="t" style="left:78.0px;top:156.6px;font-size:28.8px;line-height:28.8px;color:#262e30;letter-spacing:0.28px;">Printer</span>
<svg class="b" style="left:781.0px;top:155.0px" width="30" height="30" viewBox="0 0 30 30" fill="none" stroke="#262e30" stroke-width="2.7" stroke-linejoin="round"><path d="M18.62 24.43 L18.06 28.05 L11.94 28.05 L11.38 24.43 L8.64 22.85 L5.23 24.17 L2.17 18.87 L5.02 16.58 L5.02 13.42 L2.17 11.13 L5.23 5.83 L8.64 7.15 L11.38 5.57 L11.94 1.95 L18.06 1.95 L18.62 5.57 L21.36 7.15 L24.77 5.83 L27.83 11.13 L24.98 13.42 L24.98 16.58 L27.83 18.87 L24.77 24.17 L21.36 22.85 Z"/><circle cx="15.0" cy="15.0" r="4.50"/></svg>
<div class="b" style="left:12px;top:212px;width:420px;height:192px;background:#fff;border:1.5px solid #e4e4e4;border-radius:13px;box-shadow:0 1px 2px rgba(0,0,0,.04);"></div>
<div class="b" style="left:443.5px;top:212px;width:188.5px;height:192px;background:#fff;border:1.5px solid #e4e4e4;border-radius:13px;box-shadow:0 1px 2px rgba(0,0,0,.04);"></div>
<div class="b" style="left:643.5px;top:212px;width:189.5px;height:192px;background:#f7f7f7;border:2.2px solid #4fad52;border-radius:13px;"></div>
<svg class="b" style="left:172px;top:232px" width="88" height="100" viewBox="172 232 88 100"><defs><linearGradient id="pg" x1="0" x2="1"><stop offset="0" stop-color="#d3d5d8"/><stop offset="0.7" stop-color="#c2c4c8"/><stop offset="1" stop-color="#85888d"/></linearGradient><filter id="pb"><feGaussianBlur stdDeviation="0.55"/></filter></defs><g filter="url(#pb)"><path d="M210 254 C210 230 245 230 245.5 254" fill="none" stroke="#9fa2a6" stroke-width="1.3" stroke-dasharray="3.5 2"/><path d="M244.5 300 C251 305 250 315 246 321" fill="none" stroke="#a5a8ac" stroke-width="1.1"/><rect x="190" y="258" width="54.5" height="4.2" fill="#c4c6ca"/><rect x="190" y="258" width="8" height="59" fill="url(#pg)"/><rect x="235.3" y="258" width="9.5" height="62" fill="url(#pg)"/><rect x="182" y="267.3" width="69.5" height="5.4" fill="#b9bcc0"/><rect x="181" y="268" width="8.5" height="11" rx="1" fill="#8d9095"/><rect x="245.4" y="265.7" width="7" height="8" rx="1" fill="#9a9da2"/><rect x="207.4" y="260.3" width="10.2" height="9.5" rx="1" fill="#a3a6aa"/><rect x="206.5" y="269.5" width="11.5" height="6.5" rx="1" fill="#3e4145"/><rect x="209.5" y="265.5" width="3.5" height="2" fill="#6b5a2a"/><path d="M176.5 316 H236 V326 Q236 328 234 328 H178.5 Q176.5 328 176.5 326 Z" fill="#c6c8cc"/><path d="M178 326 H236 V328.5 H180 Z" fill="#8b8e93"/><path d="M183 313 L197 310 H233 L236 313 L224 318 H190 Z" fill="#4b4e53"/><path d="M220.5 313 L226 310 H238 L244.5 313 V323 H220.5 Z" fill="#55585d"/><rect x="224" y="311" width="10" height="3.5" fill="#2b2d31"/></g></svg>
<svg class="b" style="left:119px;top:357px" width="21" height="13" viewBox="0 0 21 13" fill="none" stroke="#a6a6a6" stroke-width="2.0" stroke-linecap="round" stroke-linejoin="round"><path d="M1.5 2 L10.5 10 L19.5 2"/></svg>
<span class="t" style="left:152.5px;top:350.5px;font-size:28px;line-height:28px;color:#262e30;letter-spacing:-0.06px;">Bambu Lab A1</span>
<svg class="b" style="left:494px;top:238px" width="88" height="96" viewBox="0 0 88 96"><defs><linearGradient id="gd" x1="0" y1="0" x2="1" y2="1"><stop offset="0" stop-color="#c4a25f"/><stop offset="0.55" stop-color="#d2b374"/><stop offset="1" stop-color="#c7a765"/></linearGradient></defs><path d="M2 3 H33 V1 H54 V3 H86 V90 H62 V94 H28 V90 H2 Z" fill="url(#gd)"/><rect x="33" y="31" width="22" height="31" fill="none" stroke="#e3cd9b" stroke-width="0.9"/><path d="M44 31 V62" stroke="#e3cd9b" stroke-width="0.9"/><path d="M6 88 H58" stroke="#b6985a" stroke-width="0.8"/><rect x="76" y="86.5" width="8" height="2.5" fill="#f1e6c8"/></svg>
<svg class="b" style="left:589px;top:230px" width="26" height="26" viewBox="0 0 26 26" fill="none" stroke="#555b5d" stroke-width="2"><circle cx="13" cy="13" r="11.2"/><path d="M10.5 11.5 H13.6 V18.5 M10.2 18.8 H16.6" stroke-width="2.2"/><circle cx="13" cy="7.6" r="1.5" fill="#555b5d" stroke="none"/></svg>
<svg class="b" style="left:461px;top:357px" width="21" height="13" viewBox="0 0 21 13" fill="none" stroke="#a6a6a6" stroke-width="2.0" stroke-linecap="round" stroke-linejoin="round"><path d="M1.5 2 L10.5 10 L19.5 2"/></svg>
<span class="t" style="left:494.0px;top:350.5px;font-size:28px;line-height:28px;color:#262e30;letter-spacing:0.48px;">Texture...</span>
<svg class="b" style="left:705px;top:254px" width="64" height="64" viewBox="0 0 64 64" fill="none" stroke="#4fad52" stroke-width="3.5" stroke-linecap="butt"><path d="M13.93 19.81 A21.8 21.8 0 0 1 53.15 26.73"/><path d="M47.94 46.87 A21.8 21.8 0 0 1 10.85 37.27"/><path d="M61.9 23.3 L50.6 24.3 L53.5 36.4 Z" fill="#4fad52" stroke="none"/><path d="M2.1 40.7 L13.4 39.7 L10.5 27.6 Z" fill="#4fad52" stroke="none"/></svg>
<span class="t" style="left:678.5px;top:327.5px;font-size:29px;line-height:29px;color:#000;letter-spacing:-0.04px;">Sync info</span>
<div class="b" style="left:34px;top:433px;width:2px;height:2px;background:#ccc;"></div>
<div class="b" style="left:11px;top:438px;width:822px;height:183px;background:#fafafa;border:1.5px solid #ececec;border-radius:13px;"></div>
<div class="b" style="left:34px;top:462px;width:188px;height:48px;background:#f5f5f5;"></div>
<span class="t" style="left:38.0px;top:473.2px;font-size:27.5px;line-height:27.5px;color:#909090;letter-spacing:-0.21px;">Nozzle</span>
<span class="t" style="left:38.5px;top:541.8px;font-size:28.5px;line-height:28.5px;color:#262e30;letter-spacing:0.13px;">Diameter</span>
<div class="b" style="left:165px;top:531px;width:253.5px;height:47.5px;background:#fff;border:2px solid #d8d8d8;"></div>
<svg class="b" style="left:180px;top:549px" width="20" height="13" viewBox="0 0 20 13" fill="none" stroke="#a6a6a6" stroke-width="2.0" stroke-linecap="round" stroke-linejoin="round"><path d="M1.5 2 L10.0 10 L18.5 2"/></svg>
<span class="t" style="left:212.5px;top:541.8px;font-size:28.5px;line-height:28.5px;color:#262e30;letter-spacing:0.19px;">0.4</span>
<span class="t" style="left:440.5px;top:541.8px;font-size:28.5px;line-height:28.5px;color:#262e30;letter-spacing:-0.56px;">Flow</span>
<div class="b" style="left:509px;top:531px;width:279.5px;height:47.5px;background:#fff;border:2px solid #d8d8d8;"></div>
<svg class="b" style="left:523px;top:549px" width="20" height="13" viewBox="0 0 20 13" fill="none" stroke="#a6a6a6" stroke-width="2.0" stroke-linecap="round" stroke-linejoin="round"><path d="M1.5 2 L10.0 10 L18.5 2"/></svg>
<span class="t" style="left:556.5px;top:541.8px;font-size:28.5px;line-height:28.5px;color:#262e30;letter-spacing:0.19px;">Standard</span>
<div class="b" style="left:2px;top:630px;width:840px;height:63px;background:linear-gradient(#f8f8f8,#f0f0f0);border-top:1.5px solid #c9c9c9;border-bottom:1.5px solid #d6d6d6;"></div>
<svg class="b" style="left:23px;top:647px" width="32" height="30" viewBox="0 0 32 30" fill="none" stroke-width="1.9" stroke-linecap="round"><path d="M6 2 C1 7 1 23 6 28" stroke="#5d6567"/><path d="M12 2 C7 7 7 23 12 28" stroke="#4fad52"/><path d="M17.5 2 C12.5 7 12.5 23 17.5 28" stroke="#4fad52"/><path d="M23 2 C18 7 18 23 23 28" stroke="#5d6567"/><ellipse cx="26.5" cy="15" rx="3.8" ry="13" stroke="#5d6567"/></svg>
<span class="t" style="left:78.0px;top:647.7px;font-size:28.6px;line-height:28.6px;color:#262e30;letter-spacing:0.13px;">Project Filaments</span>
<div class="b" style="left:610px;top:660.6px;width:24px;height:2.7999999999999545px;background:#262e30;border-radius:1.4px;"></div>
<div class="b" style="left:620.6px;top:650px;width:2.7999999999999545px;height:24px;background:#262e30;border-radius:1.4px;"></div>
<div class="b" style="left:666px;top:660.6px;width:24px;height:2.7999999999999545px;background:#262e30;border-radius:1.4px;"></div>
<svg class="b" style="left:717px;top:646px" width="38" height="34" viewBox="0 0 38 34" fill="none" stroke="#262e30" stroke-width="2" stroke-linejoin="round"><path d="M4 13 V3.5 Q4 2 5.5 2 H27.5 Q29 2 29 3.5 V12"/><path d="M9 4 V12 M14 4 V12 M19 4 V12 M24 4 V12" stroke-width="2.2"/><path d="M17 27 H3.5 Q2 27 2 25.5 V14.5 Q2 13 3.5 13 H29"/><circle cx="26.5" cy="23" r="9.3" fill="#f4f4f4"/><path d="M21.5 20.5 H31 L28.6 18.2 M31.5 25.5 H22 L24.4 27.8" stroke-width="1.7" stroke-linecap="round"/></svg>
<svg class="b" style="left:779.0px;top:647.5px" width="29" height="29" viewBox="0 0 29 29" fill="none" stroke="#262e30" stroke-width="2.7" stroke-linejoin="round"><path d="M17.94 23.46 L17.45 27.06 L11.55 27.06 L11.06 23.46 L8.46 21.96 L5.10 23.33 L2.15 18.23 L5.02 16.00 L5.02 13.00 L2.15 10.77 L5.10 5.67 L8.46 7.04 L11.06 5.54 L11.55 1.94 L17.45 1.94 L17.94 5.54 L20.54 7.04 L23.90 5.67 L26.85 10.77 L23.98 13.00 L23.98 16.00 L26.85 18.23 L23.90 23.33 L20.54 21.96 Z"/><circle cx="14.5" cy="14.5" r="4.35"/></svg>
<div class="b" style="left:22px;top:740px;width:40px;height:40px;background:#fff;border:2px solid #6a6f71;"></div>
<span class="t" style="left:34.0px;top:746.0px;font-size:29px;line-height:29px;color:#262e30;letter-spacing:0.00px;">1</span>
<div class="b" style="left:75px;top:731px;width:690px;height:57.5px;background:#fff;border:2px solid #d8d8d8;"></div>
<svg class="b" style="left:90px;top:753px" width="21" height="13" viewBox="0 0 21 13" fill="none" stroke="#a6a6a6" stroke-width="2.0" stroke-linecap="round" stroke-linejoin="round"><path d="M1.5 2 L10.5 10 L19.5 2"/></svg>
<svg class="b" style="left:128px;top:746px" width="22" height="29" viewBox="0 0 22 29"><rect x="0.5" y="0.5" width="21" height="28" rx="2" fill="#262e30"/><path d="M9.2 0 V29 M0 17 L9.2 13 M9.2 9.5 L22 12.5" stroke="#fff" stroke-width="1.5" fill="none"/></svg>
<span class="t" style="left:160.0px;top:747.7px;font-size:28.6px;line-height:28.6px;color:#262e30;letter-spacing:-0.23px;">PLA Basic</span>
<svg class="b" style="left:778px;top:745px" width="32" height="32" viewBox="0 0 32 32"><circle cx="16" cy="16" r="13.6" fill="none" stroke="#262e30" stroke-width="2.3"/><circle cx="10.2" cy="16" r="1.7" fill="#262e30"/><circle cx="16" cy="16" r="1.7" fill="#262e30"/><circle cx="21.8" cy="16" r="1.7" fill="#262e30"/></svg>
<div class="b" style="left:2px;top:826px;width:840px;height:63px;background:linear-gradient(#f8f8f8,#f0f0f0);border-top:1.5px solid #c9c9c9;border-bottom:1.5px solid #d6d6d6;"></div>
<svg class="b" style="left:22px;top:843px" width="34" height="31" viewBox="0 0 34 31" fill="none" stroke-width="2.1" stroke-linejoin="round" stroke-linecap="round"><path d="M9 2 H31.5 L25 11 H2.5 Z" stroke="#5d6567"/><path d="M31.5 9.5 L25 19.5 H2.5 L5 16" stroke="#4fad52"/><path d="M31.5 18.5 L25 28.5 H2.5 L5 25" stroke="#5d6567"/></svg>
<span class="t" style="left:78.0px;top:844.2px;font-size:28.6px;line-height:28.6px;color:#262e30;letter-spacing:-0.14px;">Process</span>
<div class="b" style="left:200px;top:836px;width:206px;height:43.5px;background:#d9d9d9;border-radius:22px;"></div>
<div class="b" style="left:202px;top:838px;width:104.5px;height:39.5px;background:#4fad52;border-radius:20px;"></div>
<span class="t" style="left:220.5px;top:846.0px;font-size:25px;line-height:25px;color:#fff;letter-spacing:-1.05px;-webkit-text-stroke:0.5px #fff;">Global</span>
<span class="t" style="left:310.5px;top:846.0px;font-size:25px;line-height:25px;color:#7c7c7c;letter-spacing:-0.54px;">Objects</span>
<span class="t" style="left:509.0px;top:844.2px;font-size:28.6px;line-height:28.6px;color:#262e30;letter-spacing:-0.10px;">Advanced</span>
<div class="b" style="left:646px;top:842px;width:55px;height:32px;background:#4fad52;border-radius:16px;"></div>
<div class="b" style="left:671.5px;top:845px;width:26.0px;height:26px;background:#fff;border-radius:13px;"></div>
<svg class="b" style="left:722px;top:845px" width="32" height="26" viewBox="0 0 32 26" fill="none" stroke="#262e30" stroke-width="2.5" stroke-linecap="round"><path d="M2.5 3.5 H3 M10 3.5 H29.5 M2.5 13 H3 M10 13 H29.5 M2.5 22.5 H3 M10 22.5 H29.5"/></svg>
<svg class="b" style="left:777px;top:843px" width="34" height="31" viewBox="0 0 34 31" fill="none" stroke="#262e30" stroke-width="2.3" stroke-linecap="round" stroke-linejoin="round"><path d="M5 29 L27 2"/><path d="M3 7.5 H16 M11 2.5 L16 7.5 L11 12.5"/><path d="M31 23 H18 M23 18 L18 23 L23 28"/></svg>
<svg class="b" style="left:24px;top:925px" width="30" height="30" viewBox="0 0 30 30" fill="none" stroke="#e27d55" stroke-width="2.3" stroke-linecap="round"><path d="M7.5 24 A11 11 0 1 1 25.5 15"/><path d="M20.5 12.5 L30 12.5 L25.3 19.5 Z" fill="#e27d55" stroke="none"/></svg>
<div class="b" style="left:75px;top:911px;width:622.5px;height:57.5px;background:#fff;border:2px solid #d8d8d8;"></div>
<svg class="b" style="left:90px;top:933px" width="21" height="13" viewBox="0 0 21 13" fill="none" stroke="#a6a6a6" stroke-width="2.0" stroke-linecap="round" stroke-linejoin="round"><path d="M1.5 2 L10.5 10 L19.5 2"/></svg>
<span class="t" style="left:122.5px;top:928.3px;font-size:28.4px;line-height:28.4px;color:#262e30;letter-spacing:-0.14px;">* 0.12mm High Quality @BBL A1</span>
<svg class="b" style="left:724px;top:926px" width="28" height="27" viewBox="0 0 28 27" fill="none" stroke="#262e30" stroke-width="2.2" stroke-linejoin="round"><path d="M2.5 4 Q2.5 2 4.5 2 H19 L25.5 8.5 V23 Q25.5 25 23.5 25 H4.5 Q2.5 25 2.5 23 Z"/><path d="M7.5 2.5 V9 H17 V2.5 M6.5 25 V17 H21.5 V25"/></svg>
<svg class="b" style="left:778px;top:924px" width="34" height="34" viewBox="0 0 34 34" fill="none" stroke="#262e30" stroke-width="2.4" stroke-linecap="round"><circle cx="13" cy="13" r="10.3"/><path d="M20.5 20.5 L31 31"/></svg>
<span class="t" style="left:30.5px;top:993.7px;font-size:28.6px;line-height:28.6px;color:#6e6e6e;letter-spacing:0.16px;">Quality</span>
<span class="t" style="left:180.5px;top:993.7px;font-size:28.6px;line-height:28.6px;color:#e27d55;letter-spacing:0.56px;font-weight:700;">Strength</span>
<span class="t" style="left:362.5px;top:993.7px;font-size:28.6px;line-height:28.6px;color:#6e6e6e;letter-spacing:-0.18px;">Speed</span>
<span class="t" style="left:506.5px;top:993.7px;font-size:28.6px;line-height:28.6px;color:#e27d55;letter-spacing:0.55px;">Support</span>
<span class="t" style="left:672.5px;top:993.7px;font-size:28.6px;line-height:28.6px;color:#6e6e6e;letter-spacing:0.33px;">Others</span>
<div class="b" style="left:173px;top:1030px;width:134px;height:4.5px;background:#4fad52;border-radius:2.5px;"></div>
<div class="b" style="left:2px;top:1035px;width:840px;height:1.5px;background:#cfcfcf;"></div>
<div class="b" style="left:812px;top:1050px;width:1.5px;height:859px;background:#ededed;"></div>
<div class="b" style="left:813.5px;top:1050px;width:28.5px;height:859px;background:#fafafa;"></div>
<div class="b" style="left:819.8px;top:1056px;width:16.0px;height:360px;background:#7f7f7f;border-radius:8px;"></div>
<svg class="b" style="left:22px;top:1072px" width="36" height="32" viewBox="0 0 36 32" fill="none" stroke="#262e30" stroke-width="2.1" stroke-linejoin="round" stroke-linecap="round"><path d="M2.5 5 Q2.5 3 4.5 3 Q10 1.5 17 4 Q25 6.5 31.5 4.5 Q33.5 4 33.5 6 V27 Q33.5 29 31.5 29.5 Q25 31 17 28.5 Q10 26 4.5 27.5 Q2.5 28 2.5 26 Z"/><path d="M8.5 11 Q12 9.5 16 11 M12 17 Q17 15 22 17 Q24 17.8 26 17.3" stroke-width="1.9"/></svg>
<span class="t" style="left:69.0px;top:1075.7px;font-size:28.6px;line-height:28.6px;color:#262e30;letter-spacing:-0.16px;font-weight:700;">Walls</span>
<div class="b" style="left:152px;top:1086.5px;width:640px;height:2.0px;background:#ebebeb;"></div>
<span class="t" style="left:62.5px;top:1137.7px;font-size:28.6px;line-height:28.6px;color:#e27d55;letter-spacing:0.07px;">Wall loops</span>
<svg class="b" style="left:468px;top:1134px" width="30" height="30" viewBox="0 0 30 30" fill="none" stroke="#e27d55" stroke-width="2.3" stroke-linecap="round"><path d="M7.5 24 A11 11 0 1 1 25.5 15"/><path d="M20.5 12.5 L30 12.5 L25.3 19.5 Z" fill="#e27d55" stroke="none"/></svg>
<div class="b" style="left:503px;top:1125px;width:238.5px;height:47.5px;background:#fff;border:2px solid #d8d8d8;"></div>
<div class="b" style="left:506px;top:1128px;width:29px;height:41.5px;background:#fafafa;"></div>
<div class="b" style="left:506px;top:1148px;width:29px;height:1.5px;background:#ececec;"></div>
<svg class="b" style="left:512px;top:1128px" width="18" height="40" viewBox="0 0 18 40" fill="none" stroke="#9b9b9b" stroke-width="1.9" stroke-linecap="round" stroke-linejoin="round"><path d="M2.5 11.5 L9 4.5 L15.5 11.5"/><path d="M2.5 28 L9 35 L15.5 28"/></svg>
<span class="t" style="left:547.5px;top:1135.8px;font-size:28.5px;line-height:28.5px;color:#262e30;letter-spacing:0.00px;">3</span>
<span class="t" style="left:62.5px;top:1193.7px;font-size:28.6px;line-height:28.6px;color:#262e30;letter-spacing:0.25px;">Embedding the wall into the</span>
<span class="t" style="left:62.5px;top:1225.7px;font-size:28.6px;line-height:28.6px;color:#262e30;letter-spacing:0.55px;">infill</span>
<div class="b" style="left:504px;top:1206px;width:32.5px;height:32.5px;background:#fff;border:2px solid #a9a9a9;border-radius:3px;"></div>
<span class="t" style="left:62.5px;top:1281.7px;font-size:28.6px;line-height:28.6px;color:#262e30;letter-spacing:0.37px;">Detect thin wall</span>
<div class="b" style="left:504px;top:1278px;width:32.5px;height:32.5px;background:#fff;border:2px solid #a9a9a9;border-radius:3px;"></div>
<svg class="b" style="left:23px;top:1366px" width="32" height="31" viewBox="0 0 32 31" fill="none" stroke="#262e30" stroke-width="2.2" stroke-linejoin="round"><rect x="2" y="2" width="28" height="27" rx="1.5"/><rect x="3" y="3" width="26" height="5" fill="#b9b9b9" stroke="none"/><rect x="3" y="23" width="26" height="5" fill="#b9b9b9" stroke="none"/><path d="M2 8.5 H30 M2 22.5 H30"/></svg>
<span class="t" style="left:66.5px;top:1367.7px;font-size:28.6px;line-height:28.6px;color:#262e30;letter-spacing:0.21px;font-weight:700;">Top/bottom shells</span>
<div class="b" style="left:324px;top:1379px;width:468px;height:2px;background:#ebebeb;"></div>
<span class="t" style="left:62.5px;top:1429.7px;font-size:28.6px;line-height:28.6px;color:#262e30;letter-spacing:0.48px;">Top surface pattern</span>
<div class="b" style="left:503px;top:1417px;width:238.5px;height:47.5px;background:#fff;border:2px solid #d8d8d8;"></div>
<svg class="b" style="left:514px;top:1418px" width="44" height="43" viewBox="0 0 44 43"><defs><clipPath id="cp1417"><rect x="2" y="2" width="40" height="39" rx="2"/></clipPath></defs><g clip-path="url(#cp1417)" stroke="#262e30" stroke-width="2.1" fill="none"><path d="M-40.0 -2 L2.0 40"/><path d="M-30.6 -2 L11.4 40"/><path d="M-21.2 -2 L20.8 40"/><path d="M-11.8 -2 L30.2 40"/><path d="M-2.4 -2 L39.6 40"/><path d="M7.0 -2 L49.0 40"/><path d="M16.4 -2 L58.4 40"/><path d="M25.8 -2 L67.8 40"/><path d="M35.2 -2 L77.2 40"/><path d="M44.6 -2 L86.6 40"/></g><rect x="1.5" y="1.5" width="41" height="40" rx="2.5" fill="none" stroke="#262e30" stroke-width="2.4"/></svg>
<span class="t" style="left:568.5px;top:1426.8px;font-size:28.5px;line-height:28.5px;color:#262e30;letter-spacing:0.48px;">Monotonic...</span>
<span class="t" style="left:62.5px;top:1486.7px;font-size:28.6px;line-height:28.6px;color:#262e30;letter-spacing:0.06px;">Top shell layers</span>
<div class="b" style="left:503px;top:1474px;width:238.5px;height:47.5px;background:#fff;border:2px solid #d8d8d8;"></div>
<div class="b" style="left:506px;top:1477px;width:29px;height:41.5px;background:#fafafa;"></div>
<div class="b" style="left:506px;top:1497px;width:29px;height:1.5px;background:#ececec;"></div>
<svg class="b" style="left:512px;top:1477px" width="18" height="40" viewBox="0 0 18 40" fill="none" stroke="#9b9b9b" stroke-width="1.9" stroke-linecap="round" stroke-linejoin="round"><path d="M2.5 11.5 L9 4.5 L15.5 11.5"/><path d="M2.5 28 L9 35 L15.5 28"/></svg>
<span class="t" style="left:547.5px;top:1484.8px;font-size:28.5px;line-height:28.5px;color:#262e30;letter-spacing:0.00px;">5</span>
<span class="t" style="left:62.5px;top:1542.7px;font-size:28.6px;line-height:28.6px;color:#262e30;letter-spacing:0.28px;">Top shell thickness</span>
<div class="b" style="left:503px;top:1530px;width:238.5px;height:47.5px;background:#fff;border:2px solid #d8d8d8;"></div>
<span class="t" style="left:516.5px;top:1538.8px;font-size:28.5px;line-height:28.5px;color:#262e30;letter-spacing:0.19px;">0.6</span>
<span class="t" style="left:680.0px;top:1545.5px;font-size:24px;line-height:24px;color:#6b6b6b;letter-spacing:1.52px;">mm</span>
<span class="t" style="left:62.5px;top:1598.7px;font-size:28.6px;line-height:28.6px;color:#262e30;letter-spacing:0.28px;">Top paint penetration layers</span>
<div class="b" style="left:503px;top:1586px;width:238.5px;height:47.5px;background:#fff;border:2px solid #d8d8d8;"></div>
<div class="b" style="left:506px;top:1589px;width:29px;height:41.5px;background:#fafafa;"></div>
<div class="b" style="left:506px;top:1609px;width:29px;height:1.5px;background:#ececec;"></div>
<svg class="b" style="left:512px;top:1589px" width="18" height="40" viewBox="0 0 18 40" fill="none" stroke="#9b9b9b" stroke-width="1.9" stroke-linecap="round" stroke-linejoin="round"><path d="M2.5 11.5 L9 4.5 L15.5 11.5"/><path d="M2.5 28 L9 35 L15.5 28"/></svg>
<span class="t" style="left:547.5px;top:1596.8px;font-size:28.5px;line-height:28.5px;color:#262e30;letter-spacing:0.00px;">5</span>
<span class="t" style="left:62.5px;top:1654.7px;font-size:28.6px;line-height:28.6px;color:#262e30;letter-spacing:0.51px;">Bottom surface pattern</span>
<div class="b" style="left:503px;top:1642px;width:238.5px;height:47.5px;background:#fff;border:2px solid #d8d8d8;"></div>
<svg class="b" style="left:514px;top:1643px" width="44" height="43" viewBox="0 0 44 43"><defs><clipPath id="cp1642"><rect x="2" y="2" width="40" height="39" rx="2"/></clipPath></defs><g clip-path="url(#cp1642)" stroke="#262e30" stroke-width="2.1" fill="none"><path d="M-40.0 -2 L2.0 40"/><path d="M-30.6 -2 L11.4 40"/><path d="M-21.2 -2 L20.8 40"/><path d="M-11.8 -2 L30.2 40"/><path d="M-2.4 -2 L39.6 40"/><path d="M7.0 -2 L49.0 40"/><path d="M16.4 -2 L58.4 40"/><path d="M25.8 -2 L67.8 40"/><path d="M35.2 -2 L77.2 40"/><path d="M44.6 -2 L86.6 40"/><path d="M2 32 L10 39 M31 2 L39 9" stroke-width="2.6"/></g><rect x="1.5" y="1.5" width="41" height="40" rx="2.5" fill="none" stroke="#262e30" stroke-width="2.4"/></svg>
<span class="t" style="left:568.5px;top:1651.8px;font-size:28.5px;line-height:28.5px;color:#262e30;letter-spacing:0.63px;">Monotonic</span>
<span class="t" style="left:62.5px;top:1710.7px;font-size:28.6px;line-height:28.6px;color:#262e30;letter-spacing:0.16px;">Bottom shell layers</span>
<div class="b" style="left:503px;top:1698px;width:238.5px;height:47.5px;background:#fff;border:2px solid #d8d8d8;"></div>
<div class="b" style="left:506px;top:1701px;width:29px;height:41.5px;background:#fafafa;"></div>
<div class="b" style="left:506px;top:1721px;width:29px;height:1.5px;background:#ececec;"></div>
<svg class="b" style="left:512px;top:1701px" width="18" height="40" viewBox="0 0 18 40" fill="none" stroke="#9b9b9b" stroke-width="1.9" stroke-linecap="round" stroke-linejoin="round"><path d="M2.5 11.5 L9 4.5 L15.5 11.5"/><path d="M2.5 28 L9 35 L15.5 28"/></svg>
<span class="t" style="left:547.5px;top:1708.8px;font-size:28.5px;line-height:28.5px;color:#262e30;letter-spacing:0.00px;">5</span>
<span class="t" style="left:62.5px;top:1766.7px;font-size:28.6px;line-height:28.6px;color:#262e30;letter-spacing:0.36px;">Bottom shell thickness</span>
<div class="b" style="left:503px;top:1754px;width:238.5px;height:47.5px;background:#fff;border:2px solid #d8d8d8;"></div>
<span class="t" style="left:516.5px;top:1762.8px;font-size:28.5px;line-height:28.5px;color:#262e30;letter-spacing:0.00px;">0</span>
<span class="t" style="left:680.0px;top:1769.5px;font-size:24px;line-height:24px;color:#6b6b6b;letter-spacing:1.52px;">mm</span>
<span class="t" style="left:62.5px;top:1821.7px;font-size:28.6px;line-height:28.6px;color:#262e30;letter-spacing:0.45px;">Bottom paint penetration</span>
<span class="t" style="left:62.5px;top:1853.7px;font-size:28.6px;line-height:28.6px;color:#262e30;letter-spacing:-0.16px;">layers</span>
<div class="b" style="left:503px;top:1826px;width:238.5px;height:47.5px;background:#fff;border:2px solid #d8d8d8;"></div>
<div class="b" style="left:506px;top:1829px;width:29px;height:41.5px;background:#fafafa;"></div>
<div class="b" style="left:506px;top:1849px;width:29px;height:1.5px;background:#ececec;"></div>
<svg class="b" style="left:512px;top:1829px" width="18" height="40" viewBox="0 0 18 40" fill="none" stroke="#9b9b9b" stroke-width="1.9" stroke-linecap="round" stroke-linejoin="round"><path d="M2.5 11.5 L9 4.5 L15.5 11.5"/><path d="M2.5 28 L9 35 L15.5 28"/></svg>
<span class="t" style="left:547.5px;top:1836.8px;font-size:28.5px;line-height:28.5px;color:#262e30;letter-spacing:0.00px;">5</span>
<div class="b" style="left:503px;top:1898px;width:238.5px;height:14px;background:#fff;border:2px solid #d8d8d8;border-bottom:none;"></div>
<svg class="b" style="left:514px;top:1901px" width="44" height="9" viewBox="0 0 44 9"><g stroke="#262e30" stroke-width="2" fill="none"><rect x="1.5" y="1.5" width="41" height="20" rx="2.5" stroke-width="2.4"/><path d="M2 9 L9 2 M9 9 L16 2 M16 9 L23 2 M23 9 L30 2 M30 9 L37 2 M37 9 L42 4 M4 2 L11 9 M11 2 L18 9 M18 2 L25 9 M25 2 L32 9 M32 2 L39 9" stroke-width="1.5"/></g></svg>
<div class="b" style="left:0px;top:0px;width:2940px;height:66px;background:#000;"></div>
<div class="b" style="left:0px;top:66px;width:2940px;height:72px;background:#3b4346;"></div>
<div class="b" style="left:348px;top:66px;width:263px;height:71px;background:#4fad52;"></div>
<svg class="b" style="left:20px;top:81px" width="42" height="42" viewBox="0 0 42 42"><path d="M21 2.5 L40 20 Q41 21.5 39 21.5 L35 21.5 L35 39 Q35 41 33 41 L26 41 L26 27 L16 27 L16 41 L9 41 Q7 41 7 39 L7 21.5 L3 21.5 Q1 21.5 2 20 Z" fill="#fff"/></svg>
<svg class="b" style="left:139px;top:85px" width="34" height="34" viewBox="0 0 34 34" fill="none" stroke="#fff" stroke-width="2.3" stroke-linejoin="round" stroke-linecap="round"><path d="M17 2.5 L31.5 10 L31.5 24.5 L17 32 L2.5 24.5 L2.5 10 Z"/><path d="M2.5 10 L17 17.5 L31.5 10"/></svg>
<span class="t" style="left:193.5px;top:85.8px;font-size:28.5px;line-height:28.5px;color:#fff;letter-spacing:-0.07px;-webkit-text-stroke:0.4px #fff;">Prepare</span>
<svg class="b" style="left:403px;top:85px" width="34" height="34" viewBox="0 0 34 34" fill="none" stroke="#fff" stroke-width="2.3" stroke-linejoin="round" stroke-linecap="round"><path d="M17 2.5 L31.5 10.5 L17 18.5 L2.5 10.5 Z"/><path d="M2.5 17.5 L17 25.5 L31.5 17.5"/><path d="M2.5 24 L17 32 L31.5 24"/></svg>
<span class="t" style="left:457.5px;top:85.8px;font-size:28.5px;line-height:28.5px;color:#fff;letter-spacing:0.02px;-webkit-text-stroke:0.4px #fff;">Preview</span>
<svg class="b" style="left:672px;top:85px" width="37" height="34" viewBox="0 0 37 34" fill="none" stroke="#fff" stroke-width="2.2" stroke-linejoin="round" stroke-linecap="round"><rect x="1.5" y="2" width="15" height="9" rx="1"/><path d="M9 11 V15.5 M4.5 15.5 H13.5"/><path d="M25 2 H34.5 V11"/><path d="M2 22 V31.5 H11"/><rect x="21.5" y="17.5" width="14" height="14" rx="1"/><path d="M28.5 17.5 V22 M25.5 27 H31.5"/></svg>
<span class="t" style="left:728.0px;top:85.8px;font-size:28.5px;line-height:28.5px;color:#fff;letter-spacing:0.08px;-webkit-text-stroke:0.4px #fff;">Device</span>
<svg class="b" style="left:935px;top:85px" width="36" height="34" viewBox="0 0 36 34" fill="none" stroke="#fff" stroke-width="2.2" stroke-linejoin="round" stroke-linecap="round"><rect x="1.5" y="2" width="33" height="30" rx="2.5"/><path d="M8 10 H8.5 M13 10 H28 M8 17 H8.5 M13 17 H28 M8 24 H8.5 M13 24 H28"/></svg>
<span class="t" style="left:989.5px;top:85.8px;font-size:28.5px;line-height:28.5px;color:#fff;letter-spacing:0.47px;-webkit-text-stroke:0.4px #fff;">Project</span>
<svg class="b" style="left:1178px;top:87px" width="28" height="28" viewBox="0 0 28 28" fill="none" stroke="#fff" stroke-width="2.2" stroke-linejoin="round" stroke-linecap="round"><path d="M11 2 H17 L18 5.5 L21.5 4.2 L25 9 L22.6 11.6 V16.4 L25 19 L21.5 23.8 L18 22.5 L17 26 H11 L10 22.5 L6.5 23.8 L3 19 L5.4 16.4 V11.6 L3 9 L6.5 4.2 L10 5.5 Z"/><path d="M14 19 V10 M10.3 13.2 L14 9.5 L17.7 13.2" stroke-width="2.4"/></svg>
<span class="t" style="left:1229.5px;top:85.8px;font-size:28.5px;line-height:28.5px;color:#fff;letter-spacing:0.38px;-webkit-text-stroke:0.4px #fff;">Calibration</span>
<svg class="b" style="left:2206px;top:86px" width="30" height="30" viewBox="0 0 30 30"><rect x="1.5" y="2" width="27" height="27" rx="1.5" fill="none" stroke="#fff" stroke-width="2.2"/><rect x="2.5" y="3" width="11" height="25" fill="#4fad52"/><path d="M14.5 2 V29 M14.5 17 H28" stroke="#fff" stroke-width="2.2"/><rect x="18" y="0" width="12" height="12" fill="#9373ee"/></svg>
<div class="b" style="left:2280px;top:80px;width:2px;height:43px;background:#5b6366;"></div>
<div class="b" style="left:2303px;top:78px;width:48px;height:47px;background:#4fad52;border-radius:24px 0 0 24px;"></div>
<div class="b" style="left:2356px;top:78px;width:209px;height:47px;background:#6b6b6b;border-radius:0 24px 24px 0;"></div>
<svg class="b" style="left:2320px;top:96px" width="18" height="12" viewBox="0 0 18 12" fill="none" stroke="#fff" stroke-width="2.2" stroke-linecap="round" stroke-linejoin="round"><path d="M2 3 L9 9 L16 3"/></svg>
<span class="t" style="left:2386.0px;top:85.8px;font-size:28.5px;line-height:28.5px;color:#a3a3a3;letter-spacing:0.15px;">Slice plate</span>
<div class="b" style="left:2595px;top:78px;width:48px;height:47px;background:#4fad52;border-radius:24px 0 0 24px;"></div>
<div class="b" style="left:2648px;top:78px;width:207px;height:47px;background:#4fad52;border-radius:0 24px 24px 0;"></div>
<svg class="b" style="left:2612px;top:96px" width="18" height="12" viewBox="0 0 18 12" fill="none" stroke="#fff" stroke-width="2.2" stroke-linecap="round" stroke-linejoin="round"><path d="M2 3 L9 9 L16 3"/></svg>
<span class="t" style="left:2678.0px;top:85.8px;font-size:28.5px;line-height:28.5px;color:#fff;letter-spacing:0.37px;-webkit-text-stroke:0.4px #fff;">Print plate</span>
</body></html>
